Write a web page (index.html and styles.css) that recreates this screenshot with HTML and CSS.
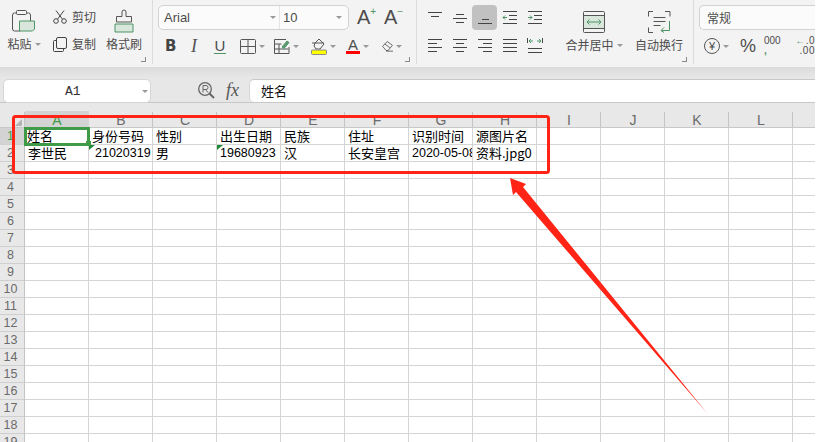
FILE: index.html
```html
<!DOCTYPE html>
<html lang="zh-CN">
<head>
    <meta charset="UTF-8">
    <title>WPS 表格</title>
    <link rel="stylesheet" href="styles.css">
</head>
<body>
<div class="app">
    <div class="ribbon">
        <div class="group clip-group">
            <div class="big paste">
                <svg width="24" height="23" viewBox="0 0 24 23" fill="none" stroke="#555"><path d="M4.5 3.5h-2a2 2 0 0 0-2 2v14a2 2 0 0 0 2 2h6M14.500 3.500h2a2 2 0 0 1 2 2v6"/><rect x="4.500" y="1" width="10" height="4" rx="1"/><path d="M7.500 11.500h15v8l-2 2h-13z" fill="#d8e6dc" stroke="#4f9465"/></svg>
                <div class="label">粘贴<i class="caret"></i></div>
            </div>
            <div class="mini">
                <div class="mini-row">
                    <svg width="14" height="14" viewBox="0 0 14 14" fill="none" stroke="#444"><circle cx="3" cy="11" r="2.300"/><circle cx="11" cy="11" r="2.300"/><path d="M4.500 9.200 11 .5M9.500 9.200 3 .5"/></svg>
                    <span>剪切</span>
                </div>
                <div class="mini-row">
                    <svg width="14" height="15" viewBox="0 0 14 15" fill="none" stroke="#444"><rect x="3.500" y=".5" width="10" height="11" rx="1.500"/><path d="M3 3.500H1.500a1 1 0 0 0-1 1v9a1 1 0 0 0 1 1h8a1 1 0 0 0 1-1V12"/></svg>
                    <span>复制</span>
                </div>
            </div>
            <div class="big brush">
                <svg width="20" height="23" viewBox="0 0 20 23" fill="none" stroke="#555"><path d="M8 7V2.500a2 2 0 0 1 4 0V7h5.500v5.500h-15V7z"/><path d="M1 14.500h18v8H1z" fill="#d8e6dc" stroke="#4f9465"/></svg>
                <div class="label">格式刷</div>
            </div>
            <i class="launcher"></i>
        </div>

        <div class="group font-group">
            <div class="font-select">
                <div class="font-name">Arial<i class="caret"></i></div>
                <div class="font-size">10<i class="caret"></i></div>
            </div>
            <div class="grow">A<sup>+</sup></div>
            <div class="shrink">A<sup>−</sup></div>
            <div class="font-tools">
                <b class="t-bold">B</b>
                <em class="t-italic">I</em>
                <span class="t-under">U</span>
                <div class="tool">
                    <svg width="16" height="15" viewBox="0 0 16 15" fill="none" stroke="#555"><rect x=".5" y=".5" width="15" height="14" rx="1"/><path d="M8 .5v14M.5 7.500h15"/></svg>
                    <i class="caret"></i>
                </div>
                <div class="tool">
                    <svg width="16" height="15" viewBox="0 0 16 15" fill="none" stroke="#555"><path d="M12 .5H.5v14H15V8M.5 5h7M.5 10h14M5 5v9.500"/><path d="M8 8l5-6 2 1.500-5 6z" fill="#5d9c72" stroke="#4f9465"/></svg>
                    <i class="caret"></i>
                </div>
                <div class="tool">
                    <svg width="16" height="17" viewBox="0 0 16 17" fill="none" stroke="#555"><path d="M1 5h12M4 5l4-4 5 5-4 5H5L3 8z"/><rect x=".5" y="12" width="15" height="4.500" rx="1" fill="#ffff00" stroke="#888"/></svg>
                    <i class="caret"></i>
                </div>
                <div class="tool">
                    <span class="font-color">A</span>
                    <i class="caret"></i>
                </div>
                <div class="tool">
                    <svg width="16" height="16" viewBox="0 0 16 16" fill="none" stroke="#333"><path d="M.8 8.500 7.500 1.500l7.700 5.500-6.200 7.500H6zM4 5l7.500 5.500"/><path d="M6 15.500h10"/></svg>
                    <i class="caret"></i>
                </div>
            </div>
            <i class="launcher"></i>
        </div>

        <div class="group align-group">
            <div class="align-grid">
                <div class="cell"><svg width="16" height="12" viewBox="0 0 16 12" stroke="#444"><path d="M1 .5h14M4 4.500h8"/></svg></div>
                <div class="cell"><svg width="16" height="12" viewBox="0 0 16 12" stroke="#444"><path d="M4 2.500h8M1 6.500h14M4 10.500h8"/></svg></div>
                <div class="cell cell-on"><svg width="16" height="12" viewBox="0 0 16 12" stroke="#444"><path d="M5 7.500h7M1 11.500h14"/></svg></div>
                <div class="cell"><svg width="16" height="14" viewBox="0 0 16 14" stroke="#444" fill="none"><path d="M1 .5h14M7 4.500h8M7 8.500h8M1 12.500h14"/><path d="M5 6.500H1M3 4.500l-2 2 2 2" stroke="#4f9465"/></svg></div>
                <div class="cell"><svg width="16" height="14" viewBox="0 0 16 14" stroke="#444" fill="none"><path d="M1 .5h14M7 4.500h8M7 8.500h8M1 12.500h14"/><path d="M1 6.500h4M3 4.500l2 2-2 2" stroke="#4f9465"/></svg></div>
                <div class="cell"><svg width="16" height="14" viewBox="0 0 16 14" stroke="#444"><path d="M1 .5h14M1 4.500h9M1 8.500h14M1 12.500h9"/></svg></div>
                <div class="cell"><svg width="16" height="14" viewBox="0 0 16 14" stroke="#444"><path d="M1 .5h14M4 4.500h8M1 8.500h14M4 12.500h8"/></svg></div>
                <div class="cell"><svg width="16" height="14" viewBox="0 0 16 14" stroke="#444"><path d="M1 .5h14M6 4.500h9M1 8.500h14M6 12.500h9"/></svg></div>
                <div class="cell"><svg width="16" height="14" viewBox="0 0 16 14" stroke="#444"><path d="M1 .5h14M1 4.500h14M1 8.500h14M1 12.500h14"/></svg></div>
                <div class="cell"><svg width="16" height="15" viewBox="0 0 16 15" stroke="#444" fill="none"><path d="M.5 0v5M15.500 0v5M1 10.500h14M1 14.500h14"/><path d="M2 3h4M4 1 2 3l2 2M10 3h4M12 1l2 2-2 2" stroke="#4f9465"/></svg></div>
            </div>
            <div class="big merge">
                <svg width="22" height="22" viewBox="0 0 22 22" fill="none" stroke="#555"><rect x=".5" y=".5" width="21" height="21" rx="1"/><rect x=".5" y="4.500" width="21" height="13" fill="#d8e6dc" stroke="#555"/><path d="M4 11h14M6.500 8.500 4 11l2.500 2.500M15.500 8.500 18 11l-2.500 2.500" stroke="#4f9465"/></svg>
                <div class="label">合并居中<i class="caret"></i></div>
            </div>
            <div class="big wrap">
                <svg width="23" height="22" viewBox="0 0 23 22" fill="none" stroke="#555"><path d="M5 .5H.5v5M17 .5h5v5M.5 16.500v5H5"/><path d="M5.500 6.500h12M5.500 10.500h12M5.500 14.500h7"/><path d="M21.500 10v9.500h-8M16 16.500l-3 3 3 2" stroke="#4f9465"/></svg>
                <div class="label">自动换行</div>
            </div>
            <i class="launcher"></i>
        </div>

        <div class="group num-group">
            <div class="num-select">常规</div>
            <div class="num-tools">
                <div class="tool yuan"><span class="yuan-mark">¥</span><i class="caret"></i></div>
                <span class="percent">%</span>
                <span class="thousand">000<br><em>,</em></span>
                <span class="decimal"><em>←</em>.0<br>.00</span>
            </div>
        </div>
    </div>

    <div class="formula-bar">
        <div class="name-box">A1<i class="caret"></i></div>
        <svg class="zoom-icon" width="17" height="17" viewBox="0 0 17 17" fill="none" stroke="#666"><circle cx="7" cy="7" r="6.300" stroke-width="1.300"/><path d="M11.500 11.500l4.500 4.500" stroke-width="2"/><path d="M5 10.500V3.500h3a2 2 0 0 1 0 4H5M7.500 7.500l2.500 3"/></svg>
        <span class="fx">fx</span>
        <div class="formula-input">姓名</div>
    </div>

    <table class="sheet">
        <colgroup>
            <col class="col-head"><col class="col"><col class="col"><col class="col"><col class="col"><col class="col"><col class="col"><col class="col"><col class="col"><col class="col"><col class="col"><col class="col"><col class="col"><col class="col-last">
        </colgroup>
        <thead>
            <tr>
                <th class="corner"><i></i></th>
                <th class="picked">A</th><th>B</th><th>C</th><th>D</th><th>E</th><th>F</th><th>G</th><th>H</th><th>I</th><th>J</th><th>K</th><th>L</th><th class="last"></th>
            </tr>
        </thead>
        <tbody>
            <tr>
                <th class="picked">1</th>
                <td class="active">姓名<i class="handle"></i></td><td>身份号码</td><td>性别</td><td>出生日期</td><td>民族</td><td>住址</td><td>识别时间</td><td>源图片名</td><td></td><td></td><td></td><td></td><td></td>
            </tr>
            <tr>
                <th>2</th>
                <td>李世民</td><td class="num id-no flag">21020319</td><td>男</td><td class="num flag">19680923</td><td>汉</td><td>长安皇宫</td><td class="num">2020-05-08</td><td>资料.jpg0</td><td></td><td></td><td></td><td></td><td></td>
            </tr>
            <tr><th>3</th><td></td><td></td><td></td><td></td><td></td><td></td><td></td><td></td><td></td><td></td><td></td><td></td><td></td></tr>
            <tr><th>4</th><td></td><td></td><td></td><td></td><td></td><td></td><td></td><td></td><td></td><td></td><td></td><td></td><td></td></tr>
            <tr><th>5</th><td></td><td></td><td></td><td></td><td></td><td></td><td></td><td></td><td></td><td></td><td></td><td></td><td></td></tr>
            <tr><th>6</th><td></td><td></td><td></td><td></td><td></td><td></td><td></td><td></td><td></td><td></td><td></td><td></td><td></td></tr>
            <tr><th>7</th><td></td><td></td><td></td><td></td><td></td><td></td><td></td><td></td><td></td><td></td><td></td><td></td><td></td></tr>
            <tr><th>8</th><td></td><td></td><td></td><td></td><td></td><td></td><td></td><td></td><td></td><td></td><td></td><td></td><td></td></tr>
            <tr><th>9</th><td></td><td></td><td></td><td></td><td></td><td></td><td></td><td></td><td></td><td></td><td></td><td></td><td></td></tr>
            <tr><th>10</th><td></td><td></td><td></td><td></td><td></td><td></td><td></td><td></td><td></td><td></td><td></td><td></td><td></td></tr>
            <tr><th>11</th><td></td><td></td><td></td><td></td><td></td><td></td><td></td><td></td><td></td><td></td><td></td><td></td><td></td></tr>
            <tr><th>12</th><td></td><td></td><td></td><td></td><td></td><td></td><td></td><td></td><td></td><td></td><td></td><td></td><td></td></tr>
            <tr><th>13</th><td></td><td></td><td></td><td></td><td></td><td></td><td></td><td></td><td></td><td></td><td></td><td></td><td></td></tr>
            <tr><th>14</th><td></td><td></td><td></td><td></td><td></td><td></td><td></td><td></td><td></td><td></td><td></td><td></td><td></td></tr>
            <tr><th>15</th><td></td><td></td><td></td><td></td><td></td><td></td><td></td><td></td><td></td><td></td><td></td><td></td><td></td></tr>
            <tr><th>16</th><td></td><td></td><td></td><td></td><td></td><td></td><td></td><td></td><td></td><td></td><td></td><td></td><td></td></tr>
            <tr><th>17</th><td></td><td></td><td></td><td></td><td></td><td></td><td></td><td></td><td></td><td></td><td></td><td></td><td></td></tr>
            <tr><th>18</th><td></td><td></td><td></td><td></td><td></td><td></td><td></td><td></td><td></td><td></td><td></td><td></td><td></td></tr>
            <tr><th>19</th><td></td><td></td><td></td><td></td><td></td><td></td><td></td><td></td><td></td><td></td><td></td><td></td><td></td></tr>
        </tbody>
    </table>

    <!-- red marks drawn over the sheet -->
    <svg class="marks" width="815" height="442" viewBox="0 0 815 442">
        <rect x="13.500" y="116.500" width="535" height="56" rx="2" fill="none" stroke="#ff2415" stroke-width="3"/>
        <polygon points="510,178 526,184 523,187 707,413 516,192 513,195" fill="#ff2415"/>
    </svg>
</div>
</body>
</html>
```

FILE: styles.css
```css
* {
    box-sizing: border-box;
}

body {
    margin: 0;
    background-color: #fff;
    font-family: "Noto Sans CJK SC", "Liberation Sans", sans-serif;
    color: #4c4c4c;
}

.app {
    position: relative;
    width: 815px;
    height: 442px;
    overflow: hidden;
}

/* ribbon */
.ribbon {
    display: flex;
    height: 67px;
    background-color: #f3f3f3;
}

.group {
    position: relative;
    display: flex;
    height: 64px;
    border-right: 1px solid #dcdcdc;
    font-size: 12px;
}

.caret {
    display: inline-block;
    width: 0;
    height: 0;
    border-left: 3px solid transparent;
    border-right: 3px solid transparent;
    border-top: 3px solid #999;
}

.launcher {
    position: absolute;
    right: 6px;
    bottom: 2px;
    width: 5px;
    height: 5px;
    border-right: 1px solid #888;
    border-bottom: 1px solid #888;
}

.big {
    display: flex;
    flex-direction: column;
    align-items: center;
    padding-top: 9px;
}

.big svg {
    height: 24px;
}

.label {
    display: flex;
    align-items: center;
    gap: 3px;
    height: 16px;
    margin-top: 3px;
    line-height: 16px;
    white-space: nowrap;
}

.clip-group {
    width: 153px;
    padding-left: 8px;
}

.paste {
    width: 32px;
}

.mini {
    display: flex;
    flex-direction: column;
    gap: 11px;
    margin-left: 13px;
    padding-top: 9px;
}

.mini-row {
    display: flex;
    align-items: center;
    gap: 5px;
    height: 16px;
    line-height: 16px;
}

.brush {
    width: 36px;
    margin-left: 10px;
}

.font-group {
    flex-wrap: wrap;
    align-content: flex-start;
    width: 264px;
    padding: 5px 0 0 5px;
}

.font-select {
    display: flex;
    width: 191px;
    height: 25px;
    background-color: #fbfbfb;
    border: 1px solid #d2d2d2;
    border-radius: 5px;
    font-size: 13px;
    line-height: 23px;
}

.font-name {
    display: flex;
    align-items: center;
    justify-content: space-between;
    width: 121px;
    padding: 0 3px 0 5px;
    border-right: 1px solid #e4e4e4;
    font-family: "Liberation Sans", sans-serif;
}

.font-size {
    display: flex;
    align-items: center;
    justify-content: space-between;
    flex: 1;
    padding: 0 6px 0 3px;
    font-family: "Liberation Sans", sans-serif;
}

.grow,
.shrink {
    height: 25px;
    font-family: "Liberation Sans", sans-serif;
    font-size: 20px;
    line-height: 25px;
}

.grow {
    margin-left: 8px;
    width: 27px;
}

.shrink {
    width: 22px;
}

.grow sup,
.shrink sup {
    color: #4f9465;
    font-size: 10px;
    line-height: 0;
    vertical-align: 9px;
}

.font-tools {
    display: grid;
    grid-template-columns: 26px 23px 26px 34px 37px 35px 36px 20px;
    align-items: center;
    width: 259px;
    height: 26px;
    margin-top: 3px;
    padding-left: 7px;
    font-family: "Liberation Sans", sans-serif;
}

.tool {
    display: flex;
    align-items: center;
    gap: 3px;
}

.t-bold {
    font-family: "DejaVu Sans", sans-serif;
    font-size: 15px;
    font-weight: bold;
    color: #444;
}

.t-italic {
    font-family: "Liberation Serif", serif;
    font-size: 18px;
    color: #555;
}

.t-under {
    width: 12px;
    border-bottom: 1px solid #4f9465;
    font-size: 15px;
    line-height: 15px;
    text-align: center;
}

.font-color {
    width: 14px;
    border-bottom: 3px solid #f00;
    font-size: 15px;
    line-height: 13px;
    text-align: center;
}

.align-group {
    width: 277px;
    padding: 5px 0 0 5px;
}

.align-grid {
    display: grid;
    grid-template-columns: repeat(5, 25px);
    grid-auto-rows: 28px;
    width: 125px;
}

.cell {
    display: flex;
    align-items: center;
    justify-content: center;
    width: 25px;
    height: 25px;
    border-radius: 4px;
}

.cell-on {
    background-color: #c1c1c1;
}

.merge {
    width: 56px;
    margin-left: 19px;
    padding-top: 5px;
}

.wrap {
    width: 48px;
    margin-left: 13px;
    padding-top: 5px;
}

.num-group {
    flex: 1;
    flex-direction: column;
    padding: 5px 0 0 5px;
    border-right: none;
}

.num-select {
    height: 25px;
    padding-left: 7px;
    background-color: #fbfbfb;
    border: 1px solid #d2d2d2;
    border-right: none;
    border-radius: 5px 0 0 5px;
    font-size: 12px;
    line-height: 23px;
}

.num-tools {
    display: grid;
    grid-template-columns: 36px 24px 26px auto;
    align-items: center;
    height: 26px;
    margin-top: 3px;
    padding-left: 5px;
    font-family: "Liberation Sans", sans-serif;
}

.yuan-mark {
    width: 16px;
    height: 16px;
    border: 1px solid #555;
    border-radius: 50%;
    font-size: 11px;
    line-height: 14px;
    text-align: center;
}

.percent {
    font-size: 18px;
    line-height: 20px;
}

.thousand,
.decimal {
    font-size: 10px;
    line-height: 10px;
    white-space: nowrap;
}

.decimal {
    letter-spacing: .5px;
    text-align: right;
}

.thousand em,
.decimal em {
    color: #4f9465;
    font-style: normal;
    font-weight: bold;
}

/* formula bar */
.formula-bar {
    display: flex;
    align-items: flex-start;
    height: 36px;
    padding: 12px 0 0 3px;
    background: linear-gradient(#dbdbdb, #e7e7e7 11px);
    border-bottom: 1px solid #c8c8c8;
}

.name-box {
    display: flex;
    align-items: center;
    justify-content: space-between;
    width: 148px;
    height: 24px;
    padding-left: 61px;
    padding-right: 2px;
    background-color: #fff;
    border: 1px solid #d6d6d6;
    border-radius: 5px;
    font-family: "Liberation Mono", monospace;
    font-size: 13px;
    color: #333;
}

.zoom-icon {
    margin: 3px 0 0 47px;
}

.fx {
    width: 23px;
    margin-left: 11px;
    font-family: "Liberation Serif", serif;
    font-size: 18px;
    font-style: italic;
    line-height: 23px;
    color: #555;
}

.formula-input {
    flex: 1;
    height: 23px;
    padding-left: 11px;
    background-color: #fff;
    border-top: 1px solid #c8c8c8;
    border-left: 1px solid #d6d6d6;
    border-radius: 5px 0 0 5px;
    font-size: 13px;
    line-height: 22px;
    color: #111;
}

/* sheet */
.sheet {
    width: 815px;
    table-layout: fixed;
    border-collapse: separate;
    border-spacing: 0;
}

.col-head {
    width: 25px;
}

.col {
    width: 64px;
}

.col-last {
    width: 22px;
}

.sheet th {
    padding: 0;
    background-color: #e8e8e8;
    font-family: "Liberation Sans", sans-serif;
    font-weight: normal;
    color: #6b6b6b;
}

.sheet thead th {
    height: 25px;
    padding-top: 9px;
    font-size: 14px;
    line-height: 14px;
    background-image: linear-gradient(#c4c4c4, #c4c4c4);
    background-position: right bottom;
    background-size: 1px 15px;
    background-repeat: no-repeat;
    border-bottom: 1px solid #c8c8c8;
    overflow: hidden;
}

.sheet thead th.last {
    background-image: none;
}

.sheet tbody th {
    height: 17px;
    padding-right: 3px;
    font-size: 12.500px;
    line-height: 14px;
    border-right: 1px solid #c4c4c4;
    border-bottom: 1px solid #cfcfcf;
}

.sheet tbody th.picked {
    background-color: #d3d3d3;
    color: #3f9b47;
}

/* the picked column head only darkens below the top strip */
.sheet thead th.picked {
    background-image: linear-gradient(#d3d3d3, #d3d3d3);
    background-position: left bottom;
    background-size: 100% 16px;
    color: #3f9b47;
}

.sheet thead th.corner {
    padding: 15px 3px 0 0;
    text-align: right;
}

.corner i {
    display: block;
    width: 7px;
    height: 7px;
    margin-left: auto;
    background-color: #b4b4b4;
    clip-path: polygon(100% 0, 100% 100%, 0 100%);
}

.sheet td {
    position: relative;
    height: 17px;
    padding: 0 0 0 3px;
    border-right: 1px solid #d4d4d4;
    border-bottom: 1px solid #d4d4d4;
    font-size: 13px;
    line-height: 16px;
    color: #000;
    white-space: nowrap;
    overflow: hidden;
}

.sheet td:last-child {
    border-right: none;
}

.sheet td.num {
    padding-left: 3px;
    font-family: "Liberation Sans", sans-serif;
    font-size: 12.500px;
    color: #000;
}

.sheet td.id-no {
    padding-left: 6px;
}

.flag::before {
    content: "";
    position: absolute;
    top: 0;
    left: 0;
    width: 6px;
    height: 5px;
    background-color: #1e8a35;
    clip-path: polygon(0 0, 100% 0, 0 100%);
}

.sheet td.active {
    padding-left: 2px;
    overflow: visible;
    outline: 3px solid #3f9b47;
    outline-offset: -2px;
    z-index: 1;
}

.handle {
    position: absolute;
    right: -3px;
    bottom: -2px;
    width: 5px;
    height: 5px;
    background-color: #3f9b47;
}

/* annotation layer */
.marks {
    position: absolute;
    top: 0;
    left: 0;
    pointer-events: none;
}
```
